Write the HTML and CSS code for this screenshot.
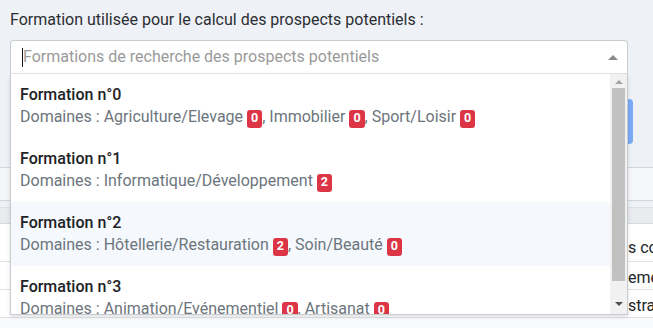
FILE: index.html
```html
<!DOCTYPE html>
<html lang="fr">
<head>
    <meta charset="UTF-8">
    <meta name="viewport" content="width=device-width, initial-scale=1.0">
    <title>Prospects potentiels</title>
    <link rel="stylesheet" href="styles.css">
</head>
<body>
    <label class="field-label">Formation utilisée pour le calcul des prospects potentiels :</label>

    <div class="select">
        <div class="select-search">
            <span class="caret"></span>
            <span class="placeholder">Formations de recherche des prospects potentiels</span>
            <span class="arrow"></span>
        </div>

        <div class="dropdown">
            <div class="options">
                <div class="option">
                    <div class="option-title">Formation n°0</div>
                    <div class="option-domains">Domaines : Agriculture/Elevage <span class="badge">0</span>, Immobilier <span class="badge">0</span>, Sport/Loisir <span class="badge">0</span></div>
                </div>
                <div class="option">
                    <div class="option-title">Formation n°1</div>
                    <div class="option-domains">Domaines : Informatique/Développement <span class="badge">2</span></div>
                </div>
                <div class="option active">
                    <div class="option-title">Formation n°2</div>
                    <div class="option-domains">Domaines : Hôtellerie/Restauration <span class="badge">2</span>, Soin/Beauté <span class="badge">0</span></div>
                </div>
                <div class="option">
                    <div class="option-title">Formation n°3</div>
                    <div class="option-domains">Domaines : Animation/Evénementiel <span class="badge">0</span>, Artisanat <span class="badge">0</span></div>
                </div>
            </div>
            <div class="scrollbar">
                <span class="scroll-up"></span>
                <div class="scroll-thumb"></div>
                <span class="scroll-down"></span>
            </div>
        </div>
    </div>

    <div class="toolbar">
        <button class="btn-search">Rechercher</button>
    </div>

    <div class="filters"></div>

    <div class="table">
        <div class="table-head"></div>
        <div class="table-row first"><span></span><span>s contactés</span></div>
        <div class="table-row"><span></span><span>ements</span></div>
        <div class="table-row"><span></span><span>stration</span></div>
        <div class="table-row light">
            <span class="cell-check"><span class="checkbox"></span>010101/0/0001</span>
            <span></span>
        </div>
    </div>
</body>
</html>
```

FILE: styles.css
```css
body {
    margin: 0;
    background-color: #eef1f6;
    font-family: Roboto, "Liberation Sans", sans-serif;
    font-size: 16px;
    color: #212529;
    overflow: hidden;
}

.field-label {
    display: block;
    padding: 9px 10px 0;
    line-height: 22px;
    margin-bottom: 9px;
    color: #2b2f33;
}

.select {
    position: relative;
    width: 618px;
    margin-left: 10px;
    z-index: 2;
}

.select-search {
    box-sizing: border-box;
    height: 34px;
    display: flex;
    align-items: center;
    padding-left: 11px;
    background-color: #fff;
    border: 1px solid #c8cbcf;
    border-bottom-color: #e4e4e4;
    border-radius: 4px 4px 0 0;
}

.caret {
    width: 1px;
    height: 19px;
    background-color: #111;
}

.placeholder {
    flex: 1;
    color: #9a9a9a;
    line-height: 22px;
}

.arrow {
    width: 0;
    height: 0;
    margin-right: 9px;
    border-left: 5px solid transparent;
    border-right: 5px solid transparent;
    border-bottom: 5px solid #8a8a8a;
}

.dropdown {
    position: absolute;
    top: 34px;
    left: 0;
    width: 618px;
    height: 241px;
    box-sizing: border-box;
    display: flex;
    background-color: #fff;
    border: 1px solid #c8cbcf;
    border-top: none;
    box-shadow: 0 2px 4px rgba(0, 0, 0, 0.12);
    overflow: hidden;
}

.options {
    flex: 1;
    overflow: hidden;
}

.option {
    padding: 10px 9px;
    line-height: 22px;
    white-space: nowrap;
}

.option.active {
    background-color: #f5f9fd;
}

.option-title {
    font-family: "Roboto Medium", Roboto, "Liberation Sans", sans-serif;
    font-weight: 500;
    color: #1f2327;
}

.option-domains {
    color: #6c757d;
}

.badge {
    display: inline-block;
    padding: 2px 4px 3px;
    font-size: 12.5px;
    font-weight: 700;
    line-height: 1;
    color: #fff;
    background-color: #dc3545;
    border-radius: 3px;
    vertical-align: 0;
}

.scrollbar {
    width: 17px;
    display: flex;
    flex-direction: column;
    align-items: center;
    background-color: #f1f1f1;
}

.scroll-up,
.scroll-down {
    width: 0;
    height: 0;
    margin: 6px 0;
    border-left: 4px solid transparent;
    border-right: 4px solid transparent;
}

.scroll-up {
    border-bottom: 4px solid #a3a3a3;
}

.scroll-down {
    border-top: 4px solid #505050;
    margin-top: auto;
    margin-bottom: 8px;
}

.scroll-thumb {
    width: 13px;
    height: 193px;
    margin-top: -2px;
    background-color: #c1c1c1;
}

.toolbar {
    height: 93px;
    display: flex;
    justify-content: flex-end;
    align-items: flex-start;
    padding-right: 20px;
}

.btn-search {
    margin-top: 25px;
    width: 120px;
    height: 45px;
    border: none;
    border-radius: 4px;
    background-color: #7baaf7;
    color: #fff;
    font-family: inherit;
    font-size: 15px;
}

.filters {
    height: 32px;
    background-color: #f5f6f8;
    border-top: 1px solid #d3d6da;
    border-bottom: 1px solid #d3d6da;
}

.table {
    margin-top: 6px;
    background-color: #fff;
    border-top: 1px solid #dee2e6;
}

.table-head {
    height: 15px;
    background-color: #e9ebee;
    border-bottom: 1px solid #d6d9dc;
}

.table-row {
    display: grid;
    grid-template-columns: 628px 1fr;
    align-items: center;
    height: 23px;
    padding-top: 4px;
    border-bottom: 1px solid #dee2e6;
    white-space: nowrap;
    color: #212529;
}

.table-row.first {
    height: 27px;
    padding-top: 10px;
}

.table-row.light {
    background-color: #f8fafc;
    align-items: start;
    padding-top: 7px;
}

.cell-check {
    display: flex;
    align-items: center;
    gap: 14px;
    padding-left: 22px;
    color: #212529;
}

.checkbox {
    width: 12px;
    height: 12px;
    border: 1px solid #767676;
    border-radius: 2px;
    background-color: #fff;
}
```
